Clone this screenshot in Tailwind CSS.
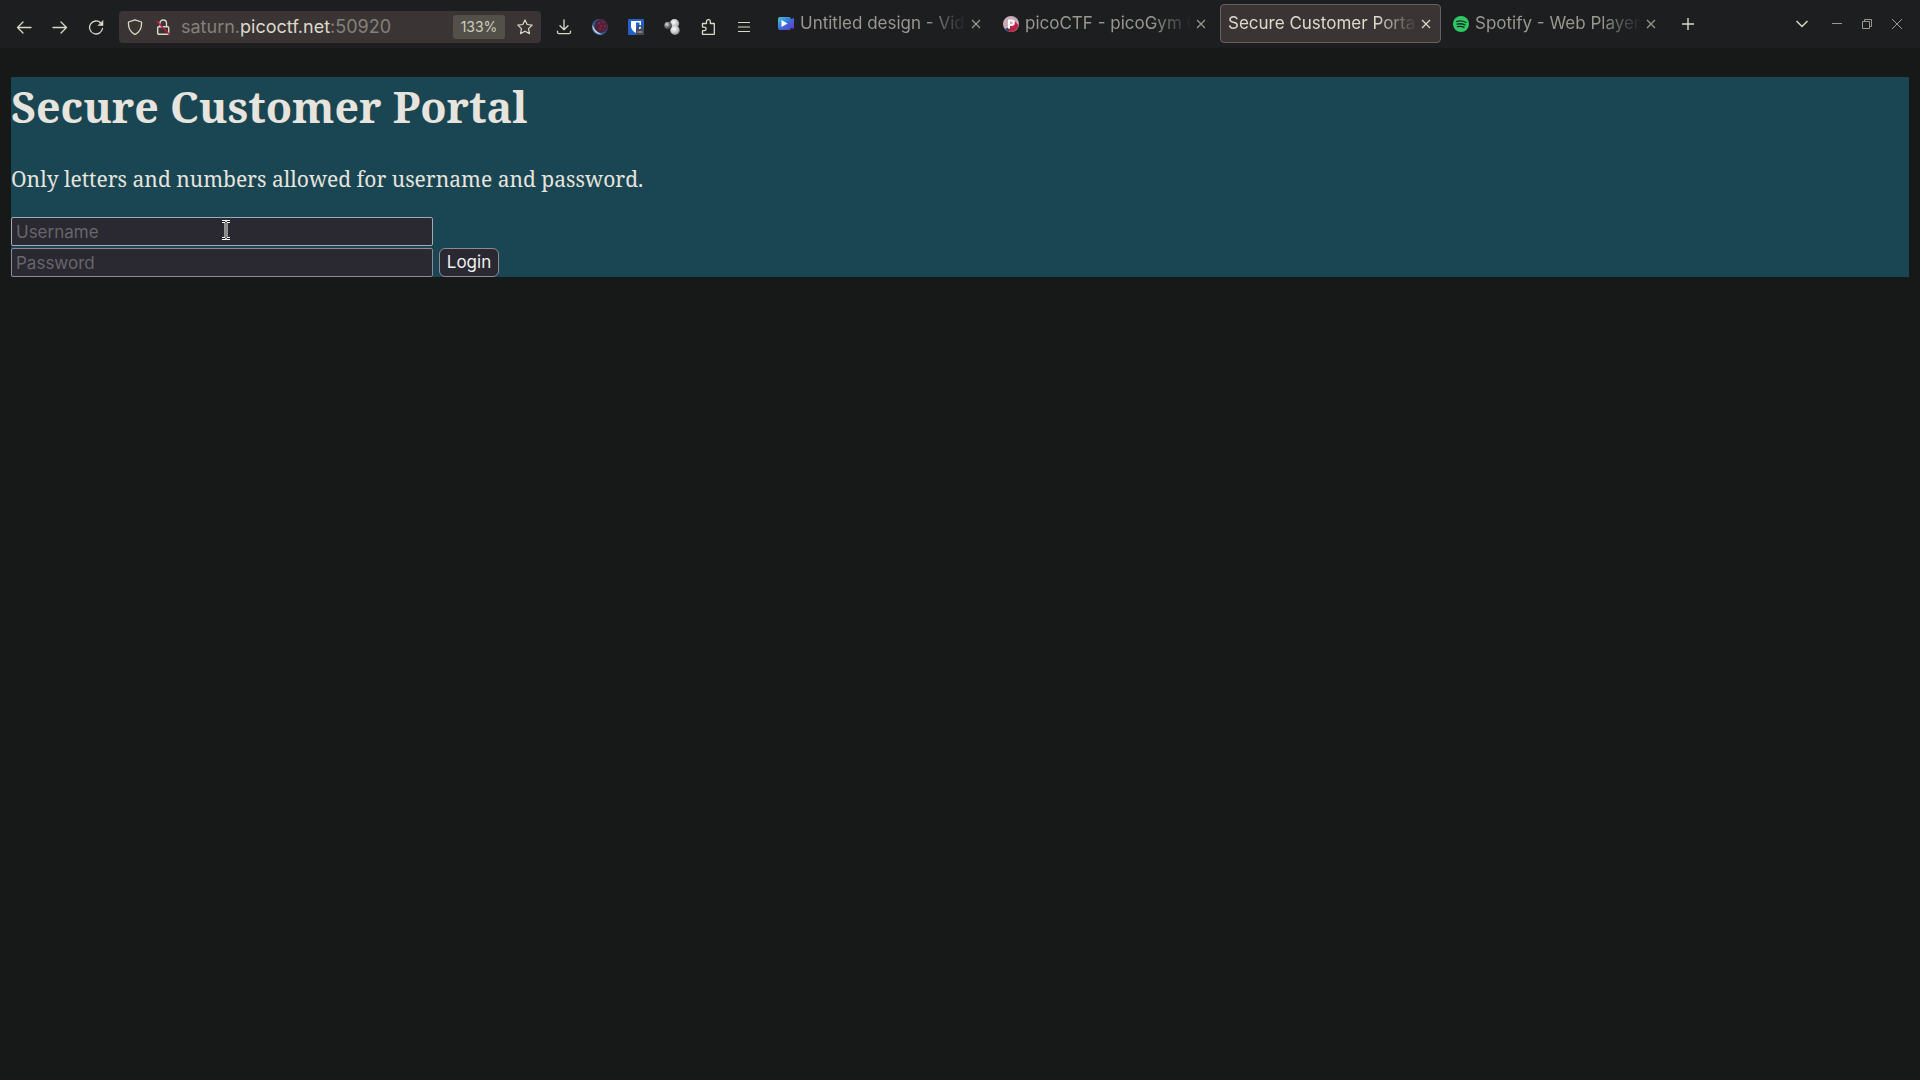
<!DOCTYPE html>
<html lang="en">
<head>
<meta charset="utf-8">
<title>Secure Customer Portal</title>
<script src="https://cdn.jsdelivr.net/npm/@tailwindcss/browser@4"></script>
</head>
<body class="min-h-screen bg-[#171918] font-['Inter',sans-serif]">
<header class="flex h-12 bg-[#1c1e20] text-[#d9d9c6]">
  <nav aria-label="Navigation" class="flex items-center pt-[6px] pl-[6px]">
    <button aria-label="Back" class="flex h-8 w-9 items-center justify-center"><svg class="size-4" viewBox="0 0 16 16" fill="none" stroke="currentColor" stroke-width="1.3" stroke-linecap="round" stroke-linejoin="round"><path d="M7 3 1.5 8.500 7 14M1.500 8.500H15"/></svg></button>
    <button aria-label="Forward" class="flex h-8 w-9 items-center justify-center"><svg class="size-4" viewBox="0 0 16 16" fill="none" stroke="currentColor" stroke-width="1.3" stroke-linecap="round" stroke-linejoin="round"><path d="m9 3 5.500 5.500L9 14M14.500 8.500H1"/></svg></button>
    <button aria-label="Reload" class="flex h-8 w-9 items-center justify-center"><svg class="size-4" viewBox="0 0 16 16" fill="none" stroke="currentColor" stroke-width="1.3" stroke-linecap="round"><path d="M12.800 4A6.500 6.500 0 1 0 14.500 9.500"/><path d="M15 1.800v4.700h-4.700z" fill="currentColor" stroke-width=".6" stroke-linejoin="round"/></svg></button>
  </nav>
  <div class="mt-[11px] ml-[5px] flex h-8 w-[422px] items-center rounded-[4px] bg-[#3a3534] pr-2">
    <button aria-label="Tracking protection" class="flex w-8 justify-center"><svg class="size-4" viewBox="0 0 16 16" fill="none" stroke="currentColor" stroke-width="1.3" stroke-linejoin="round"><path d="M8 .8 14.500 3C15 9 13 13 8 15.600 3 13 1 9 1.500 3z"/></svg></button>
    <button aria-label="Connection not secure" class="flex w-6 justify-center"><svg class="size-4" viewBox="0 0 16 16" fill="none" stroke="currentColor" stroke-width="1.4"><rect x="2.700" y="7.700" width="11" height="7.500" rx="1"/><path d="M4.900 7.500V4.300a3.300 3.300 0 0 1 6.600 0v3.200"/><path d="M1.500 2 14.500 15.500" stroke="#c01c48"/></svg></button>
    <div class="ml-[6px] flex-1 text-lg text-[#858179]">saturn.<span class="text-[#dcdacb]">picoctf.net</span>:50920</div>
    <button class="h-6 w-[52px] rounded-[3px] bg-[#53504a] text-sm text-[#cfcdbb]">133%</button>
    <button aria-label="Bookmark" class="ml-3 flex"><svg class="size-4" viewBox="0 0 16 16" fill="none" stroke="currentColor" stroke-width="1.2" stroke-linejoin="round"><path d="m8 .9 2.200 4.600 5 .6-3.700 3.500 1 5L8 12.200l-4.500 2.400 1-5L.8 6.100l5-.6z"/></svg></button>
  </div>
  <div class="flex items-center pt-[6px] pl-[5px]">
    <button aria-label="Downloads" class="flex h-8 w-9 items-center justify-center"><svg class="size-4" viewBox="0 0 16 16" fill="none" stroke="currentColor" stroke-width="1.3" stroke-linecap="round" stroke-linejoin="round"><path d="M8 .8v9.700M4 6.800l4 4 4-4M1.500 12.200v1q0 1.500 1.500 1.500h10q1.500 0 1.500-1.500v-1"/></svg></button>
    <button aria-label="Theme extension" class="flex h-8 w-9 items-center justify-center"><svg class="size-4" viewBox="0 0 16 16"><circle cx="7.800" cy="8" r="8" fill="#315e9b"/><path d="M.5 6Q0 10 3.500 13.500q3 2.500 6.500 2Q3 12 .5 6z" fill="#bdd3dc"/><circle cx="9" cy="7" r="6.700" fill="#51213a"/><path d="M6 4h2M10 3h2M8 7h2M12 7h2M7 10h2M11 10h1" stroke="#98334d"/></svg></button>
    <button aria-label="Password manager" class="flex h-8 w-9 items-center justify-center"><svg class="size-4" viewBox="0 0 16 16"><rect width="16" height="16" rx="1" fill="#2360c9"/><path d="M3 2h10v6q-1 4-5 6-4-2-5-6z" fill="#fff"/><path d="M8 3.500h3.500V8Q11 10.500 8 12z" fill="#2360c9"/><rect x="8" y="10" width="8" height="6" rx="1" fill="#454950"/><path d="M10 10V8.800a2 2 0 0 1 4 0V10" fill="none" stroke="#454950" stroke-width="1.500"/><path d="M9.500 13h5" stroke="#aeb4ba"/></svg></button>
    <button aria-label="Molecule extension" class="flex h-8 w-9 items-center justify-center"><svg class="size-4" viewBox="0 0 16 16"><defs><radialGradient id="ball" cx=".4" cy=".35" r=".7"><stop stop-color="#fff"/><stop offset=".6" stop-color="#c4c4c4"/><stop offset="1" stop-color="#777"/></radialGradient><radialGradient id="dark" cx=".35" cy=".35" r=".7"><stop stop-color="#ddd"/><stop offset=".6" stop-color="#666"/><stop offset="1" stop-color="#333"/></radialGradient></defs><circle cx="10.500" cy="4.700" r="4.700" fill="url(#ball)"/><circle cx="11" cy="11.300" r="4.700" fill="url(#ball)"/><circle cx="4" cy="6.500" r="3.800" fill="url(#dark)"/></svg></button>
    <button aria-label="Extensions" class="flex h-8 w-9 items-center justify-center"><svg class="size-4" viewBox="0 0 16 16" fill="none" stroke="currentColor" stroke-width="1.300" stroke-linejoin="round"><path d="M2.500 4.500h4V2.500a1.900 1.900 0 0 1 3.800 0v2h4v10.800H2.500v-3.600h1.800a1.800 1.800 0 0 0 0-3.600H2.500z"/></svg></button>
    <button aria-label="Menu" class="flex h-8 w-9 items-center justify-center"><svg class="size-4" viewBox="0 0 16 16" fill="none" stroke="currentColor" stroke-width="1.200"><path d="M2 3.500h12M2 8h12M2 12.500h12"/></svg></button>
  </div>
  <div class="ml-2 flex min-w-0 items-center gap-1 pb-px text-[#99978f]">
    <div class="flex h-[39px] w-[221px] min-w-0 items-center pr-[6px] pl-2">
      <svg class="size-4 shrink-0" viewBox="0 0 16 16"><defs><linearGradient id="vid" x2="1" y2="1"><stop stop-color="#4cc5cf"/><stop offset=".5" stop-color="#3a6fdb"/><stop offset="1" stop-color="#6b31bd"/></linearGradient></defs><path d="M2 1h9q2 0 2 2l3-1v11l-3-1q0 2-2 2H2q-2 0-2-2V3q0-2 2-2z" fill="url(#vid)"/><path d="M3.500 4 9.500 7.500 3.500 11z" fill="#fff"/></svg>
      <a href="#" class="ml-[6px] min-w-0 flex-1 overflow-hidden text-[17px] whitespace-nowrap [mask-image:linear-gradient(to_left,transparent,black_40px)]">Untitled design - Video</a>
      <button aria-label="Close tab" class="flex w-[18px] shrink-0 justify-center"><svg class="size-[10px]" viewBox="0 0 10 10" stroke="currentColor" stroke-width="1.200"><path d="m1 1 8 8M9 1 1 9"/></svg></button>
    </div>
    <div class="flex h-[39px] w-[221px] min-w-0 items-center pr-[6px] pl-2">
      <svg class="size-4 shrink-0" viewBox="0 0 16 16"><circle cx="8" cy="8" r="8" fill="#c9abb8"/><path d="M12 5.500 15.500 9A8 8 0 0 1 5 15.500L5 12z" fill="#bd2444"/><path d="M2 13A8 8 0 0 0 6 15.800V12H4z" fill="#27456e"/><path d="M6 12.500V4.500h2.500a2.300 2.300 0 0 1 0 4.600H6.500" fill="none" stroke="#fff" stroke-width="2"/></svg>
      <a href="#" class="ml-[6px] min-w-0 flex-1 overflow-hidden text-[17px] whitespace-nowrap [mask-image:linear-gradient(to_left,transparent,black_40px)]">picoCTF - picoGym C</a>
      <button aria-label="Close tab" class="flex w-[18px] shrink-0 justify-center"><svg class="size-[10px]" viewBox="0 0 10 10" stroke="currentColor" stroke-width="1.200"><path d="m1 1 8 8M9 1 1 9"/></svg></button>
    </div>
    <div class="flex h-[39px] w-[221px] min-w-0 items-center rounded-[4px] border border-[#66615f] bg-[#3a3534] pr-[5px] pl-[7px] text-[#dcdacb]">
      <a href="#" aria-current="page" class="min-w-0 flex-1 overflow-hidden text-[17px] whitespace-nowrap [mask-image:linear-gradient(to_left,transparent,black_40px)]">Secure Customer Portal</a>
      <button aria-label="Close tab" class="flex w-[18px] shrink-0 justify-center"><svg class="size-[10px]" viewBox="0 0 10 10" stroke="currentColor" stroke-width="1.200"><path d="m1 1 8 8M9 1 1 9"/></svg></button>
    </div>
    <div class="flex h-[39px] w-[221px] min-w-0 items-center pr-[6px] pl-2">
      <svg class="size-4 shrink-0" viewBox="0 0 16 16"><circle cx="8" cy="8" r="8" fill="#2fc866"/><path d="M3.500 5.500q5-1.500 9.500 1M4 8.200q4-1.200 8 .8M4.500 10.700q3.500-1 6.500.7" fill="none" stroke="#17291d" stroke-width="1.300" stroke-linecap="round"/></svg>
      <a href="#" class="ml-[6px] min-w-0 flex-1 overflow-hidden text-[17px] whitespace-nowrap [mask-image:linear-gradient(to_left,transparent,black_40px)]">Spotify - Web Player</a>
      <button aria-label="Close tab" class="flex w-[18px] shrink-0 justify-center"><svg class="size-[10px]" viewBox="0 0 10 10" stroke="currentColor" stroke-width="1.200"><path d="m1 1 8 8M9 1 1 9"/></svg></button>
    </div>
  </div>
  <button aria-label="New tab" class="ml-1 flex w-9 shrink-0 items-center justify-center"><svg class="size-3" viewBox="0 0 12 12" stroke="currentColor" stroke-width="1.400"><path d="M6 0v12M0 6h12"/></svg></button>
  <div class="ml-auto flex shrink-0 items-center pr-2 pb-px">
    <button aria-label="List all tabs" class="mr-[2px] flex w-9 justify-center"><svg class="size-3" viewBox="0 0 12 12" fill="none" stroke="currentColor" stroke-width="1.500"><path d="m.5 3 5.500 5.500L11.500 3"/></svg></button>
    <div class="flex text-[#99978f]">
      <button aria-label="Minimize" class="flex w-[30px] justify-center"><svg class="size-[10px]" viewBox="0 0 10 10" stroke="currentColor"><path d="M0 4.500h10"/></svg></button>
      <button aria-label="Restore" class="flex w-[30px] justify-center"><svg class="size-[10px]" viewBox="0 0 10 10" fill="none" stroke="currentColor"><path d="M.5 2.500h7v7h-7zM2.500 2.500v-2h7v7h-2"/></svg></button>
      <button aria-label="Close" class="flex w-[30px] justify-center"><svg class="size-[10px]" viewBox="0 0 10 10" stroke="currentColor"><path d="m0 0 10 10M10 0 0 10"/></svg></button>
    </div>
  </div>
</header>
<main class="mx-[11px] mt-[29px] bg-[#1a4654] text-[#e6e4dd]">
  <h1 class="font-['Noto_Serif','Droid_Serif','Liberation_Serif',serif] text-[43px] leading-[60px] font-bold">Secure Customer Portal</h1>
  <p class="pt-7 font-['Noto_Serif','Droid_Serif','Liberation_Serif',serif] text-[21px] leading-[28px]">Only letters and numbers allowed for username and password.</p>
  <form class="relative mt-6 flex flex-col gap-[2px]">
    <input type="text" aria-label="Username" placeholder="Username" class="h-[29px] w-[422px] rounded-[2px] border border-[#a1a9b3] bg-[#2a2831] px-1 text-[17px] placeholder:text-[#67666b]">
    <div class="flex gap-[6px]">
      <input type="password" aria-label="Password" placeholder="Password" class="h-[29px] w-[422px] rounded-[2px] border border-[#8e8a96] bg-[#2a2831] px-1 text-[17px] placeholder:text-[#67666b]">
      <button type="button" class="h-[29px] w-[60px] rounded-[6px] border border-[#8e8a96] bg-[#2a2831] text-center text-[17px] leading-[27px] text-[#f0f0f2]">Login</button>
    </div>
    <svg class="absolute top-[3px] left-[210px] h-5 w-[10px]" viewBox="0 0 10 20" fill="none"><path d="M1 1.500h3l1 1 1-1h3M1 18.500h3l1-1 1 1h3M5 2v16" stroke="#fff" stroke-width="3"/><path d="M1 1.500h3l1 1 1-1h3M1 18.500h3l1-1 1 1h3M5 2v16" stroke="#15151a"/></svg>
  </form>
</main>
</body>
</html>
